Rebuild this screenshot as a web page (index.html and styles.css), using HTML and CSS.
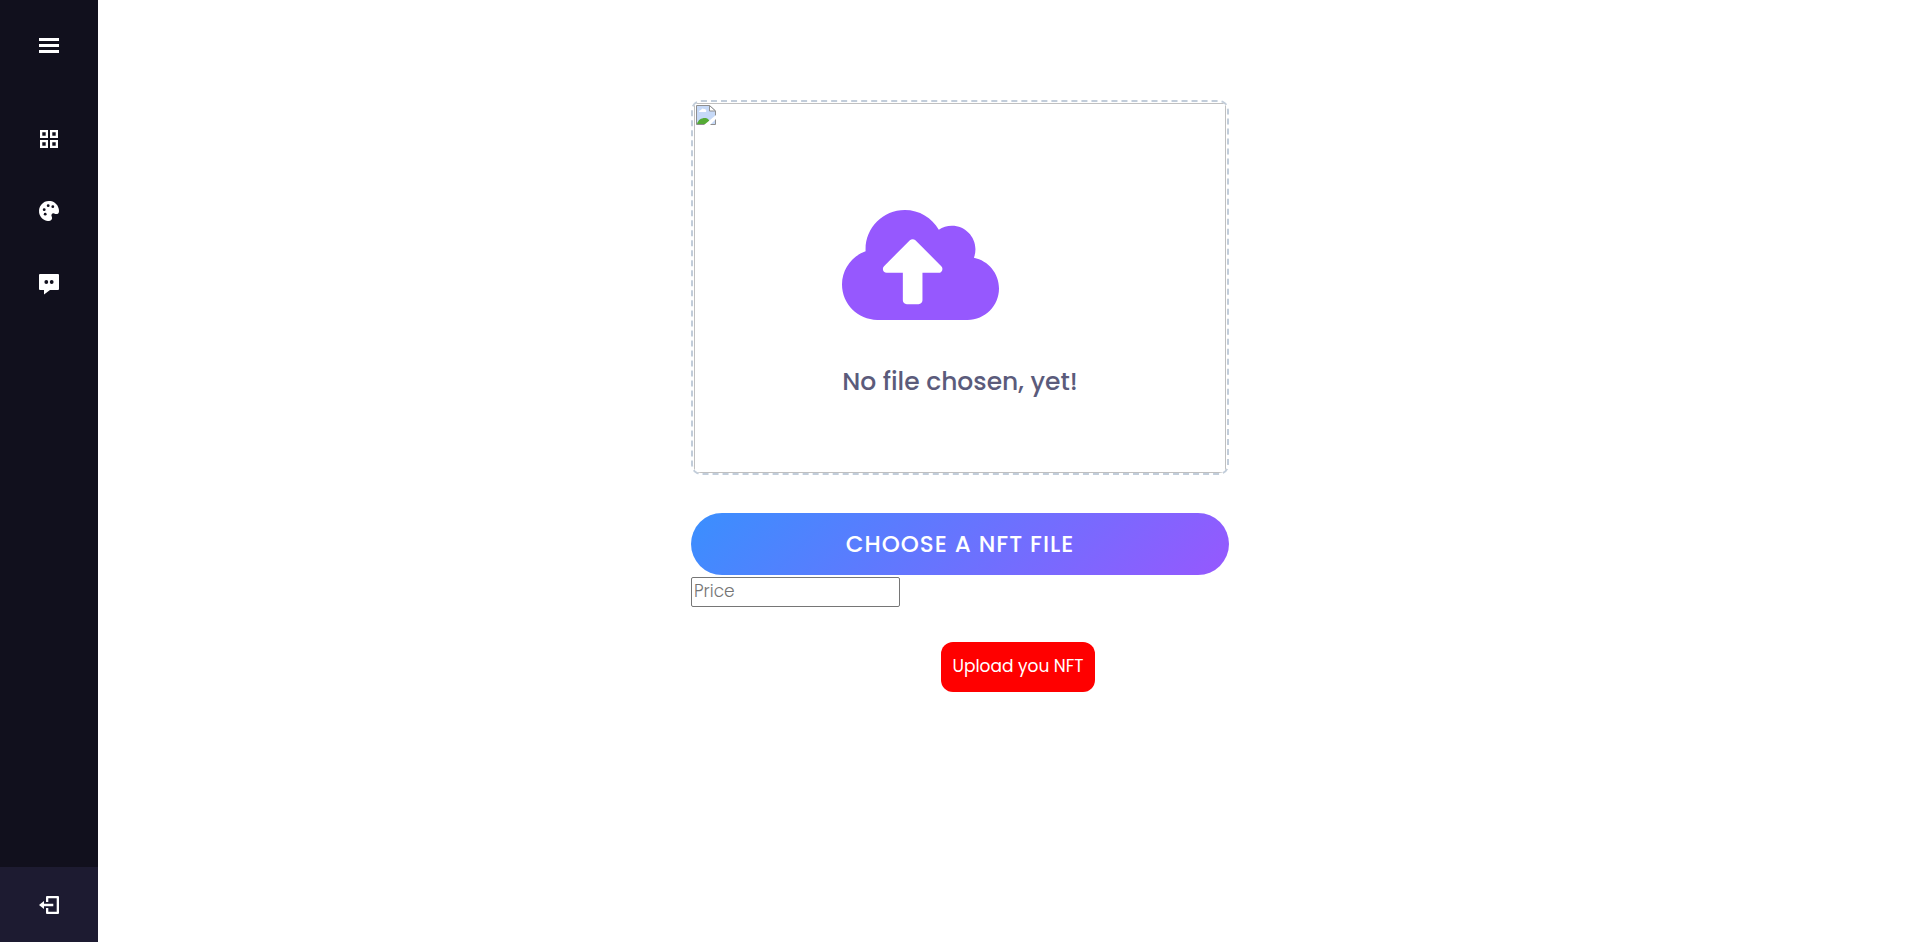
FILE: index.html
```html
<!DOCTYPE html>
<html lang="en">
    <head>
        <meta charset="UTF-8" />
        <meta name="viewport" content="width=device-width, initial-scale=1.0" />
        <title>Upload NFT</title>
        <link rel="stylesheet" href="styles.css">
    </head>
    <body>
        <nav class="sidebar">
            <button type="button" class="menu-btn" aria-label="Menu">
                <svg viewBox="0 0 30 30"><path d="M5 8h20v3H5zm0 6h20v3H5zm0 6h20v3H5z"/></svg>
            </button>
            <ul class="nav-list">
                <li>
                    <a href="#" aria-label="Dashboard">
                        <svg viewBox="0 0 24 24"><path fill-rule="evenodd" d="M3 3h8v8H3zM5.3 5.3v3.4h3.4V5.3zM13 3h8v8h-8zM15.3 5.3v3.4h3.4V5.3zM3 13h8v8H3zM5.3 15.3v3.4h3.4v-3.4zM13 13h8v8h-8zM15.3 15.3v3.4h3.4v-3.4z"/></svg>
                    </a>
                </li>
                <li>
                    <a href="#" aria-label="Artworks">
                        <svg viewBox="0 0 24 24">
                            <path d="M13.4 2.096a10.08 10.08 0 0 0-8.937 3.331A10.054 10.054 0 0 0 2.096 13.4c.53 3.894 3.458 7.207 7.285 8.246a9.982 9.982 0 0 0 2.618.354l.142-.001a3.001 3.001 0 0 0 2.516-1.426 2.989 2.989 0 0 0 .153-2.879l-.199-.416a1.919 1.919 0 0 1 .094-1.912 2.004 2.004 0 0 1 2.576-.755l.412.197c.412.198.85.299 1.301.299A3.022 3.022 0 0 0 22 12.14a9.935 9.935 0 0 0-.353-2.76c-1.04-3.826-4.353-6.754-8.247-7.284z"/>
                            <g fill="#11101d">
                                <circle cx="7.2" cy="10.7" r="1.4"/>
                                <circle cx="8.2" cy="15.2" r="1.4"/>
                                <circle cx="11.2" cy="6.7" r="1.4"/>
                                <circle cx="15.8" cy="7.7" r="1.4"/>
                            </g>
                        </svg>
                    </a>
                </li>
                <li>
                    <a href="#" aria-label="Messages">
                        <svg viewBox="0 0 24 24"><path d="M21 3H3a1 1 0 0 0-1 1v14a1 1 0 0 0 1 1h4v4.500l6-4.500h8a1 1 0 0 0 1-1V4a1 1 0 0 0-1-1zM9.300 12.900a1.900 1.900 0 1 1 0-3.800 1.900 1.900 0 0 1 0 3.800zm5.400 0a1.900 1.900 0 1 1 0-3.800 1.900 1.900 0 0 1 0 3.800z"/></svg>
                    </a>
                </li>
            </ul>
            <a href="#" class="logout" aria-label="Log out">
                <svg viewBox="0 0 24 24"><path d="m2 12 5 4v-2.800h9.300v-2.400H7V8z"/><path d="M21 3H10a1 1 0 0 0-1 1v5h2.300V5.300h8.400v13.400h-8.400V15H9v5a1 1 0 0 0 1 1h11a1 1 0 0 0 1-1V4a1 1 0 0 0-1-1z"/></svg>
            </a>
        </nav>

        <main>
            <form class="container">
                <div class="wrapper">
                    <div class="image">
                        <!-- empty preview -->
                        <svg class="broken" viewBox="0 0 20 20">
                            <path fill="#c6d9f7" stroke="#8f8f8f" d="M.5.5h13l6 5.500v13.500H.5z"/>
                            <path fill="#fff" d="M3 7a2 2 0 0 1 2-2 2 2 0 0 1 3-1 2 2 0 0 1 2 3z"/>
                            <path fill="#55ab35" d="M1 19c1-4 4-6 8-6 3 0 4 2 6 6z"/>
                            <path fill="#fff" stroke="#8f8f8f" d="M13.500.5v5.500h6z"/>
                            <path fill="#fff" d="M8 20 20 10v4l-6 6z"/>
                        </svg>
                    </div>
                    <div class="content">
                        <svg class="cloud" viewBox="0 0 640 512"><path d="M537.6 226.6c4.1-10.7 6.4-22.4 6.4-34.6 0-53-43-96-96-96-19.7 0-38.1 6-53.3 16.2C367 64.2 315.3 32 256 32c-88.4 0-160 71.6-160 160 0 2.7.1 5.4.2 8.1C40.2 219.8 0 273.2 0 336c0 79.5 64.5 144 144 144h368c70.7 0 128-57.3 128-128 0-61.9-44-113.6-102.4-125.4zM393.4 288H328v112c0 8.8-7.2 16-16 16h-48c-8.8 0-16-7.2-16-16V288h-65.4c-14.3 0-21.4-17.2-11.3-27.4l105.4-105.4c6.2-6.2 16.4-6.2 22.6 0l105.4 105.4c10.1 10.2 2.9 27.4-11.3 27.4z"/></svg>
                        <div class="text">No file chosen, yet!</div>
                    </div>
                </div>
                <button type="button" class="custom-btn">Choose a NFT file</button>
                <input type="text" class="price" placeholder="Price" aria-label="Price" />
                <button type="submit" class="upload-btn">Upload you NFT</button>
            </form>
        </main>
    </body>
</html>
```
FILE: styles.css
```css
* {
    margin: 0;
    padding: 0;
    box-sizing: border-box;
    font-family: Poppins, Inter, "Liberation Sans", sans-serif;
}
body {
    display: flex;
    min-height: 100vh;
    background: #fff;
}

/* sidebar */
.sidebar {
    display: flex;
    flex-direction: column;
    flex-shrink: 0;
    width: 98px;
    background: #11101d;
}
.sidebar svg {
    display: block;
    width: 24px;
    height: 24px;
    fill: #fff;
}
.menu-btn {
    display: flex;
    align-items: center;
    justify-content: center;
    height: 90px;
    background: none;
    border: none;
    cursor: pointer;
}
.sidebar .menu-btn svg {
    width: 30px;
    height: 30px;
}
.nav-list {
    display: flex;
    flex-direction: column;
    gap: 22px;
    margin-top: 24px;
    list-style: none;
}
.nav-list a {
    display: flex;
    align-items: center;
    justify-content: center;
    height: 50px;
}
.logout {
    display: flex;
    align-items: center;
    justify-content: center;
    height: 75px;
    padding-top: 1px;
    margin-top: auto;
    background: #1d1b31;
}

/* upload form */
main {
    flex: 1;
    padding: 100px 98px 0 0;
}
.container {
    display: flex;
    flex-direction: column;
    width: 538px;
    margin: 0 auto;
}
.wrapper {
    display: grid;
    height: 375px;
    padding: 1px 1px 0;
    border: 2px dashed #c2cdda;
    border-radius: 10px;
    overflow: hidden;
}
.image,
.content {
    grid-area: 1 / 1;
}
.image {
    padding: 1px;
    border: 1px solid #c0c0c0;
}
.broken {
    display: block;
    width: 20px;
    height: 20px;
}
.content {
    justify-self: center;
    padding-top: 99px;
}
.cloud {
    display: block;
    width: 157px;
    height: 126px;
    fill: #9658fe;
}
.text {
    margin-top: 35px;
    color: #5b5b7b;
    font-size: 25px;
    font-weight: 500;
    line-height: 38px;
}
.custom-btn {
    height: 62px;
    margin-top: 38px;
    color: #fff;
    font-size: 23px;
    font-weight: 500;
    letter-spacing: 1px;
    text-transform: uppercase;
    background: linear-gradient(135deg, #3a8ffe 0%, #9658fe 100%);
    border: none;
    border-radius: 31px;
    cursor: pointer;
}
.price {
    width: 209px;
    height: 30px;
    margin-top: 2px;
    padding: 0 2px 2px;
    font-size: 17px;
    font-weight: 300;
    border: 1px solid #767676;
    border-radius: 2px;
}
.price::placeholder {
    color: #757575;
}
.upload-btn {
    width: 154px;
    height: 50px;
    margin: 35px 0 0 250px;
    padding-bottom: 2px;
    color: #fff;
    font-size: 17px;
    background: red;
    border: none;
    border-radius: 12px;
    cursor: pointer;
}
```
